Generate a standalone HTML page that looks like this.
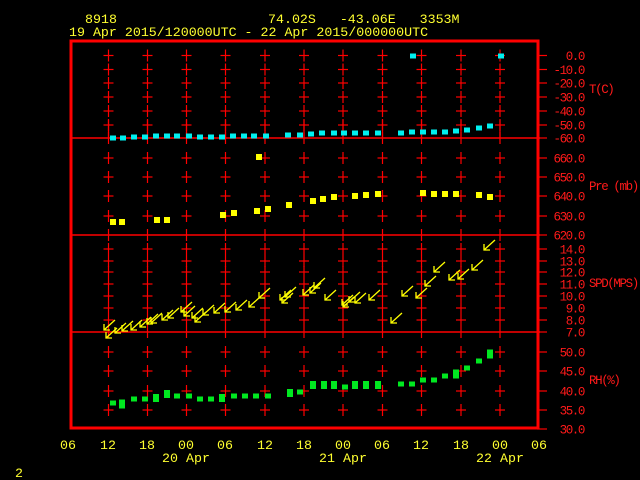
<!DOCTYPE html>
<html><head><meta charset="utf-8"><style>
html,body{margin:0;padding:0;background:#000;width:640px;height:480px;overflow:hidden}
svg{display:block}
text{font-family:"Liberation Mono","DejaVu Sans Mono",monospace;font-size:13.3px}
.sm text{font-size:12.5px;letter-spacing:-1.4px}
</style></head><body>
<svg id="s" width="640" height="480" xmlns="http://www.w3.org/2000/svg">
<g fill="#ffff30">
<text x="85" y="23">8918</text>
<text x="268" y="23" xml:space="preserve">74.02S   -43.06E   3353M</text>
<text x="69" y="36">19 Apr 2015/120000UTC - 22 Apr 2015/000000UTC</text>
<text x="15" y="477">2</text>
<g text-anchor="middle">
<text x="68" y="449">06</text><text x="108" y="449">12</text><text x="147" y="449">18</text><text x="186" y="449">00</text><text x="225" y="449">06</text><text x="265" y="449">12</text><text x="304" y="449">18</text><text x="343" y="449">00</text><text x="382" y="449">06</text><text x="421" y="449">12</text><text x="461" y="449">18</text><text x="500" y="449">00</text><text x="539" y="449">06</text>
<text x="186" y="462">20 Apr</text><text x="343" y="462">21 Apr</text><text x="500" y="462">22 Apr</text>
</g></g>
<g fill="#ff1a1a" text-anchor="end" id="lab" class="sm"></g>
<g fill="#ff1a1a" class="sm">
<text x="589" y="93">T(C)</text><text x="589" y="190" xml:space="preserve">Pre (mb)</text><text x="589" y="287">SPD(MPS)</text><text x="589" y="384">RH(%)</text>
</g>
<g id="grid" stroke="#ff0000" stroke-width="1.2"></g>
<rect x="71" y="41" width="467" height="387" fill="none" stroke="#ff0000" stroke-width="3"/>
<g stroke="#ff0000" stroke-width="1.5">
<line x1="70" y1="138" x2="540" y2="138"/><line x1="70" y1="235" x2="540" y2="235"/><line x1="70" y1="332" x2="540" y2="332"/>
</g>
<g id="data"></g>
</svg>
<script>
var NS="http://www.w3.org/2000/svg",g=document.getElementById('grid'),lab=document.getElementById('lab'),d=document.getElementById('data');
function el(p,t,a){var e=document.createElementNS(NS,t);for(var k in a)e.setAttribute(k,a[k]);p.appendChild(e);return e;}
var cols=[108.5,147.5,186.5,225.5,265,304,343,382.5,421.5,461,500];
var rows=[[55.5,"0.0"],[69.5,"-10.0"],[83,"-20.0"],[97,"-30.0"],[111,"-40.0"],[125,"-50.0"],[138,"-60.0"],
[158,"660.0"],[177,"650.0"],[196,"640.0"],[216,"630.0"],[235,"620.0"],
[249,"14.0"],[261,"13.0"],[272,"12.0"],[284,"11.0"],[296,"10.0"],[308,"9.0"],[320,"8.0"],[332,"7.0"],
[352,"50.0"],[371,"45.0"],[391,"40.0"],[410,"35.0"],[429,"30.0"]];
var div=[138,235,332,429];
rows.forEach(function(r){var y=r[0];
 el(g,'line',{x1:537,x2:547,y1:y,y2:y});
 var t=el(lab,'text',{x:584,y:y+4.5});t.textContent=r[1];
 if(y<50||y>428)return;
 cols.forEach(function(x){
  el(g,'line',{x1:x,x2:x,y1:y-6,y2:y+6});
  if(div.indexOf(y)<0)el(g,'line',{x1:x-5,x2:x+5,y1:y,y2:y});
 });
});
cols.forEach(function(x){el(g,'line',{x1:x,x2:x,y1:120,y2:138});});
[[113,138],[123,138],[134,137],[145,137],[156,136],[167,136],[177,136],[189,136],[200,137],[211,137],[222,137],[233,136],[244,136],[254,136],[266,136],[288,135],[300,135],[311,134],[322,133],[334,133],[344,133],[355,133],[366,133],[378,133],[401,133],[412,132],[423,132],[434,132],[445,132],[456,131],[467,130],[479,128],[490,126],[413,56],[501,56]].forEach(function(p){el(d,'rect',{x:p[0]-3,y:p[1]-2.5,width:6,height:5,fill:'#00f0f0'});});
[[259,157],[113,222],[122,222],[157,220],[167,220],[223,215],[234,213],[257,211],[268,209],[289,205],[313,201],[323,199],[334,197],[355,196],[366,195],[378,194],[423,193],[434,194],[445,194],[456,194],[479,195],[490,197]].forEach(function(p){el(d,'rect',{x:p[0]-3,y:p[1]-3,width:6,height:6,fill:'#ffff00'});});
[[113,403,5],[122,404,9],[134,399,5],[145,399,5],[156,398,8],[167,394,8],[177,396,5],[189,396,5],[200,399,5],[211,399,5],[222,398,8],[234,396,5],[245,396,5],[256,396,5],[268,396,5],[290,393,8],[300,392,5],[313,385,8],[324,385,8],[334,385,8],[345,387,5],[355,385,8],[366,385,8],[378,385,8],[401,384,5],[412,384,5],[423,380,5],[434,380,5],[445,376,5],[456,374,9],[467,368,5],[479,361,5],[490,354,9]].forEach(function(p){el(d,'rect',{x:p[0]-3,y:p[1]-p[2]/2,width:6,height:p[2],fill:'#00e820'});});
[[104,330],[106,338],[115,333],[122,331],[131,330],[140,327],[147,324],[151,323],[162,320],[168,318],[181,312],[184,316],[192,318],[195,322],[203,315],[214,313],[225,312],[236,310],[249,307],[259,298],[280,300],[285,297],[282,303],[303,295],[310,293],[314,288],[325,300],[342,305],[343,307],[349,302],[355,303],[369,300],[391,323],[402,296],[416,298],[425,286],[434,272],[449,280],[458,279],[472,270],[484,250]].forEach(function(p){var x=p[0],y=p[1];
 el(d,'path',{d:'M'+(x+11)+' '+(y-10)+'L'+x+' '+y+'M'+x+' '+(y-6)+'V'+y+'H'+(x+6),stroke:'#ffff00','stroke-width':1.3,fill:'none'});});
</script>
</body></html>
